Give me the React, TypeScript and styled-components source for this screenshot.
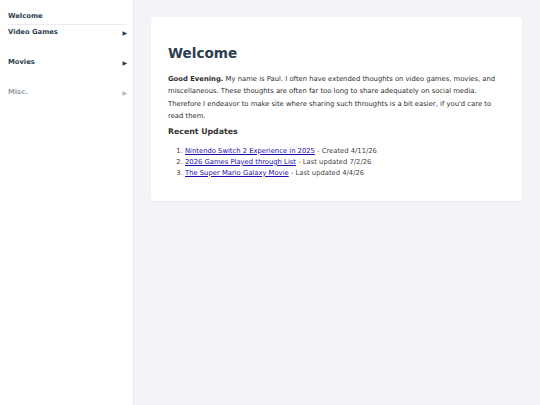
import React from 'react';
import styled, { createGlobalStyle } from 'styled-components';

const GlobalStyle = createGlobalStyle`
  html, body {
    margin: 0;
    padding: 0;
    background: #f3f3f8;
    font-family: "DejaVu Sans", Verdana, sans-serif;
  }
`;

const Layout = styled.div`
  display: flex;
  min-height: 405px;
`;

const Sidebar = styled.nav`
  width: 134px;
  flex-shrink: 0;
  background: #ffffff;
  border-right: 1px solid #e4e4ea;
  padding: 12px 6px 0 8px;
  box-sizing: border-box;
`;

const NavHome = styled.a`
  display: block;
  font-size: 6.8px;
  font-weight: bold;
  color: #2c3e50;
  padding-bottom: 4px;
  border-bottom: 1px solid #ececf0;
  text-decoration: none;
`;

const NavGroup = styled.div<{ muted?: boolean }>`
  display: flex;
  justify-content: space-between;
  align-items: flex-start;
  height: 30px;
  padding-top: 3px;
  box-sizing: border-box;
  font-size: 6.8px;
  font-weight: bold;
  color: ${(p) => (p.muted ? '#9aa0a8' : '#2c3e50')};
`;

const Arrow = styled.span<{ muted?: boolean }>`
  font-size: 6px;
  color: ${(p) => (p.muted ? '#b4b8be' : '#2c3e50')};
  margin-top: 1px;
`;

const Main = styled.main`
  flex: 1;
  padding: 17px 18px 0 17px;
`;

const Card = styled.section`
  background: #ffffff;
  border-radius: 4px;
  box-shadow: 0 1px 2px rgba(0, 0, 0, 0.06);
  padding: 28px 17px 22px 17px;
`;

const Title = styled.h1`
  margin: 0 0 12px;
  font-size: 13.6px;
  font-weight: bold;
  color: #2c3e50;
`;

const Intro = styled.p`
  margin: 0 0 4px;
  font-size: 6.82px;
  line-height: 12.4px;
  color: #2e2e2e;
`;

const SubTitle = styled.h2`
  margin: 0 0 10px;
  font-size: 7.8px;
  font-weight: bold;
  color: #333333;
`;

const UpdateList = styled.ol`
  margin: 0;
  padding-left: 17px;
  font-size: 6.8px;
  line-height: 11px;
  color: #444444;
`;

const UpdateLink = styled.a`
  color: #1a0dab;
  text-decoration: underline;
`;

const updates = [
  { title: 'Nintendo Switch 2 Experience in 2025', note: 'Created 4/11/26' },
  { title: '2026 Games Played through List', note: 'Last updated 7/2/26' },
  { title: 'The Super Mario Galaxy Movie', note: 'Last updated 4/4/26' },
];

const App = () => {
  return (
    <>
      <GlobalStyle />
      <Layout>
        <Sidebar>
          <NavHome href="#">Welcome</NavHome>
          <NavGroup>
            Video Games<Arrow>▶</Arrow>
          </NavGroup>
          <NavGroup>
            Movies<Arrow>▶</Arrow>
          </NavGroup>
          <NavGroup muted>
            Misc.<Arrow muted>▶</Arrow>
          </NavGroup>
        </Sidebar>
        <Main>
          <Card>
            <Title>Welcome</Title>
            <Intro>
              <strong>Good Evening.</strong> My name is Paul. I often have extended thoughts on video
              games, movies, and miscellaneous. These thoughts are often far too long to share
              adequately on social media. Therefore I endeavor to make site where sharing such
              throughts is a bit easier, if you'd care to read them.
            </Intro>
            <SubTitle>Recent Updates</SubTitle>
            <UpdateList>
              {updates.map((u) => (
                <li key={u.title}>
                  <UpdateLink href="#">{u.title}</UpdateLink> - {u.note}
                </li>
              ))}
            </UpdateList>
          </Card>
        </Main>
      </Layout>
    </>
  );
};

export default App;
